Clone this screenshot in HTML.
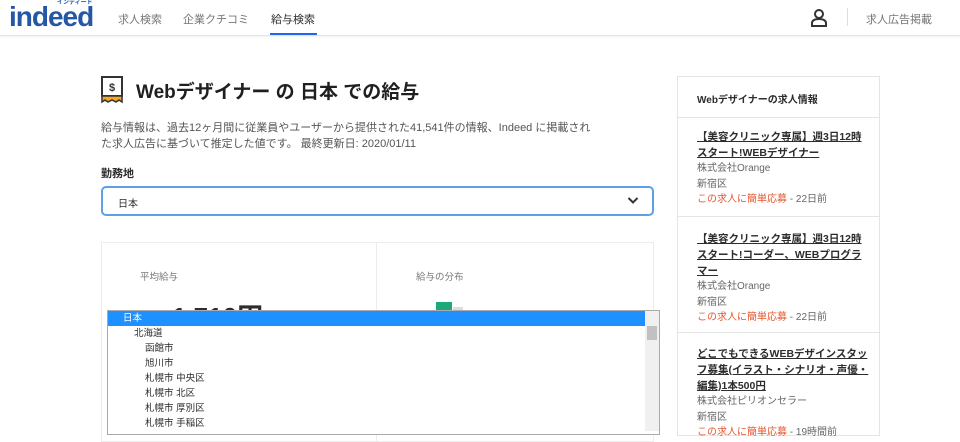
<!DOCTYPE html>
<html><head><meta charset="utf-8"><style>
*{margin:0;padding:0;box-sizing:border-box}
body{width:960px;height:431px;overflow:hidden;background:#fff;font-family:"Liberation Sans","Noto Sans CJK JP",sans-serif;color:#2d2d2d;position:relative}
.a{position:absolute;white-space:nowrap}
.hdr{position:absolute;left:0;top:0;width:960px;height:36px;border-bottom:1px solid #e4e4e4;box-shadow:0 1px 2px rgba(0,0,0,.06)}
.nav{font-size:11px;color:#767676;top:11px}
.side{font-size:10px;line-height:15.5px}
.side .t{font-weight:bold;text-decoration:underline;color:#2d2d2d;font-size:10.5px;line-height:16px}
.side .g{color:#666}
.side .o{color:#e4572e}
.dd div{height:15px;line-height:15px;font-size:9.5px}
</style></head><body>
<div class="hdr"></div>
<div class="a" style="left:9px;top:5px;font-size:28px;line-height:24px;font-weight:bold;color:#2557a7;letter-spacing:-1px">indeed</div>
<div class="a" style="left:57px;top:0px;font-size:6px;line-height:7px;color:#2557a7;font-weight:bold">インディード</div>
<div class="a nav" style="left:118px">求人検索</div>
<div class="a nav" style="left:183px">企業クチコミ</div>
<div class="a nav" style="left:271px;color:#2d2d2d">給与検索</div>
<div class="a" style="left:270px;top:33px;width:47px;height:2px;background:#2164f3"></div>
<svg class="a" style="left:810px;top:8px" width="18" height="20" viewBox="0 0 18 20"><circle cx="9" cy="6" r="4" fill="none" stroke="#333" stroke-width="2"/><path d="M2 18v-3c0-2 2-4 7-4s7 2 7 4v3z" fill="none" stroke="#333" stroke-width="2"/></svg>
<div class="a" style="left:847px;top:8px;width:1px;height:18px;background:#ddd"></div>
<div class="a nav" style="left:866px">求人広告掲載</div>

<svg class="a" style="left:101px;top:76px" width="22" height="28" viewBox="0 0 22 28"><rect x="1" y="1" width="20" height="19" fill="#fff" stroke="#333" stroke-width="2"/><text x="11" y="15" font-size="11" font-weight="bold" text-anchor="middle" fill="#333" font-family="Liberation Sans">$</text><path d="M1 20h20v6l-3-2-3 2-4-2-4 2-3-2-3 2z" fill="#f6a623" stroke="#333" stroke-width="1.5"/></svg>
<div class="a" style="left:136px;top:77px;font-size:19px;font-weight:bold;color:#1f1f1f">Webデザイナー の 日本 での給与</div>
<div class="a" style="left:101px;top:120px;font-size:11px;line-height:16px;color:#555">給与情報は、過去12ヶ月間に従業員やユーザーから提供された41,541件の情報、Indeed に掲載され<br>た求人広告に基づいて推定した値です。 最終更新日: 2020/01/11</div>
<div class="a" style="left:101px;top:165px;font-size:11px;font-weight:bold">勤務地</div>
<div class="a" style="left:101px;top:186px;width:553px;height:30px;border:2px solid #5f9fe8;border-radius:5px"></div>
<div class="a" style="left:118px;top:195px;font-size:10px">日本</div>
<svg class="a" style="left:627px;top:196px" width="12" height="9" viewBox="0 0 12 9"><path d="M1.5 2l4.5 4.5 4.5-4.5" fill="none" stroke="#333" stroke-width="2"/></svg>

<div class="a" style="left:101px;top:242px;width:553px;height:200px;border:1px solid #ececec"></div>
<div class="a" style="left:376px;top:242px;width:1px;height:200px;background:#ececec"></div>
<div class="a" style="left:140px;top:269px;font-size:9.5px;color:#777">平均給与</div>
<div class="a" style="left:416px;top:269px;font-size:9.5px;color:#777">給与の分布</div>
<div class="a" style="left:172px;top:302px;font-size:26px;line-height:30px;font-weight:bold">1,710円</div>
<div class="a" style="left:436px;top:302px;width:16px;height:12px;background:#1aaa7a"></div>
<div class="a" style="left:453px;top:307px;width:10px;height:6px;background:#ddd"></div>

<div class="a dd" style="left:107px;top:310px;width:553px;height:125px;background:#fff;border:1px solid #aaa;padding-right:14px">
<div style="background:#1e90ff;color:#fff;padding-left:15px">日本</div>
<div style="padding-left:26px">北海道</div>
<div style="padding-left:37px">函館市</div>
<div style="padding-left:37px">旭川市</div>
<div style="padding-left:37px">札幌市 中央区</div>
<div style="padding-left:37px">札幌市 北区</div>
<div style="padding-left:37px">札幌市 厚別区</div>
<div style="padding-left:37px">札幌市 手稲区</div>
</div>
<div class="a" style="left:645px;top:311px;width:14px;height:120px;background:#f0f0f0"></div>
<div class="a" style="left:647px;top:326px;width:10px;height:14px;background:#c1c1c1"></div>

<div class="a" style="left:677px;top:76px;width:203px;height:360px;border:1px solid #e4e4e4"></div>
<div class="a" style="left:697px;top:91px;font-size:10px;font-weight:bold">Webデザイナーの求人情報</div>
<div class="a" style="left:677px;top:117px;width:203px;height:1px;background:#e4e4e4"></div>
<div class="a side" style="left:697px;top:129px">
<div class="t">【美容クリニック専属】週3日12時<br>スタート!WEBデザイナー</div>
<div class="g">株式会社Orange</div><div class="g">新宿区</div>
<div><span class="o">この求人に簡単応募</span><span class="g"> - 22日前</span></div></div>
<div class="a" style="left:677px;top:216px;width:203px;height:1px;background:#e4e4e4"></div>
<div class="a side" style="left:697px;top:231px">
<div class="t">【美容クリニック専属】週3日12時<br>スタート!コーダー、WEBプログラ<br>マー</div>
<div class="g">株式会社Orange</div><div class="g">新宿区</div>
<div><span class="o">この求人に簡単応募</span><span class="g"> - 22日前</span></div></div>
<div class="a" style="left:677px;top:332px;width:203px;height:1px;background:#e4e4e4"></div>
<div class="a side" style="left:697px;top:346px">
<div class="t">どこでもできるWEBデザインスタッ<br>フ募集(イラスト・シナリオ・声優・<br>編集)1本500円</div>
<div class="g">株式会社ピリオンセラー</div><div class="g">新宿区</div>
<div><span class="o">この求人に簡単応募</span><span class="g"> - 19時間前</span></div></div>
</body></html>
